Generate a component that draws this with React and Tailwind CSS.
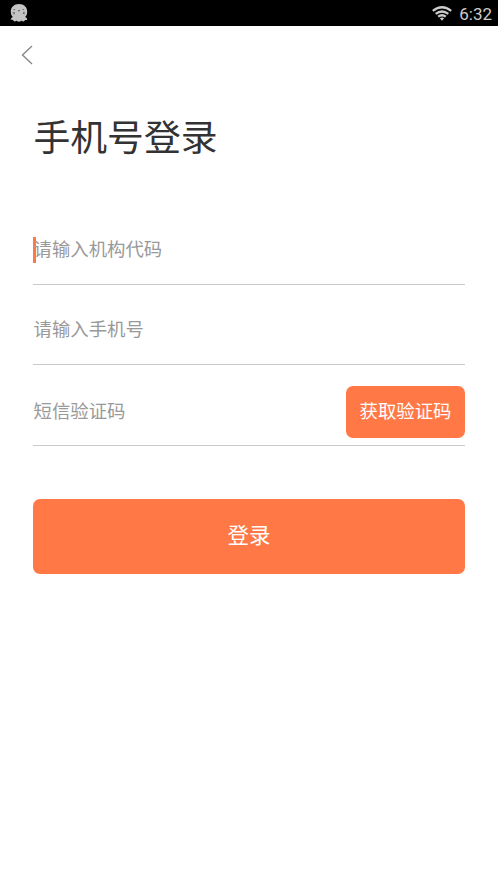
const Field = ({ label, active, className, children }) => (
  <div className={`flex justify-between border-b border-[#c9c9c9] ${className}`}>
    <div className="flex h-[26px] items-center">
      {active && <span className="-mr-[3px] h-[26px] w-[3px] bg-[#ff7846]"></span>}
      <span className="pl-[0.5px] text-[18.4px] leading-6 text-[#999999]">{label}</span>
    </div>
    {children}
  </div>
);

const GhostIcon = () => (
  <svg className="h-[18px] w-[18px]" viewBox="0 0 18 18">
    <path
      d="M9 0C4 0 .8 3.200 .8 7.700c0 2.200.7 4 2 5.100-.7.900-2.300 1.500-2 2.700.3.900 1.700.3 2.300.8.600.5.700 1.300 1.700 1.200.8-.1 1-.8 1.700-.8s.9 1 2.500 1 1.800-1 2.500-1 .9.700 1.700.8c1 .1 1.100-.7 1.700-1.200.6-.5 2 .1 2.300-.8.300-1.200-1.300-1.800-2-2.700 1.300-1.100 2-2.900 2-5.100C17.200 3.200 14 0 9 0Z"
      fill="#c4c4c4"
    />
    <g fill="none" stroke="#555555" strokeWidth="0.8">
      <path d="M3.500 5.500h1.600M12.500 5.500h1.600M2.700 8.800l2-.5M3.200 10l1.800-.6M13 8.300l2 .5M12.800 9.400l1.800.6" />
    </g>
    <path d="M8 6h2L9 7.800Z" fill="#444444" />
  </svg>
);

// Four stacked bands, widest on top
const WifiIcon = () => (
  <svg className="h-[15px] w-[20px]" viewBox="0 0 20 15" fill="none" stroke="#cccccc" strokeWidth="2.300">
    <path d="M.8 4.800Q10-2.300 19.200 4.800" />
    <path d="M3.700 7.900Q10 3 16.300 7.900" />
    <path d="M6.200 10.700Q10 7.700 13.800 10.700" />
    <path d="M7.900 12.200Q10 10.800 12.100 12.200L10 14.700Z" fill="#cccccc" stroke="none" />
  </svg>
);

export default function App() {
  return (
    <div className="min-h-screen bg-white font-['Roboto','Noto_Sans_CJK_SC',sans-serif]">
      {/* Status bar */}
      <div className="flex h-[26px] items-center justify-between bg-black pr-[6px] pl-[10px]">
        <GhostIcon />
        <div className="flex items-center gap-[7px]">
          <WifiIcon />
          <span className="pt-px text-[17px] leading-6 text-[#cccccc]">6:32</span>
        </div>
      </div>

      <div className="flex h-[58px] items-center px-[21px]">
        <svg className="h-5 w-3" viewBox="0 0 12 20" fill="none" stroke="#888888" strokeWidth="1.400">
          <path d="M11 1 1.500 10l9.500 9" />
        </svg>
      </div>

      <main className="px-[33px] pt-[28px]">
        <h1 className="pl-[0.5px] text-[36.800px] leading-[54px] text-[#333333]">手机号登录</h1>
        <div className="pt-[71px]">
          <Field label="请输入机构代码" active className="h-[48px]" />
          <Field label="请输入手机号" className="h-[80px] pt-[32px]" />
          <Field label="短信验证码" className="h-[81px] items-center pt-[13px]">
            <button className="h-[52px] w-[119px] rounded-[7px] bg-[#ff7846] text-[18.400px] text-white">获取验证码</button>
          </Field>
        </div>
        <button className="mt-[53px] h-[75px] w-full rounded-[7px] bg-[#ff7846] text-[21.500px] text-white">登录</button>
      </main>
    </div>
  );
}
